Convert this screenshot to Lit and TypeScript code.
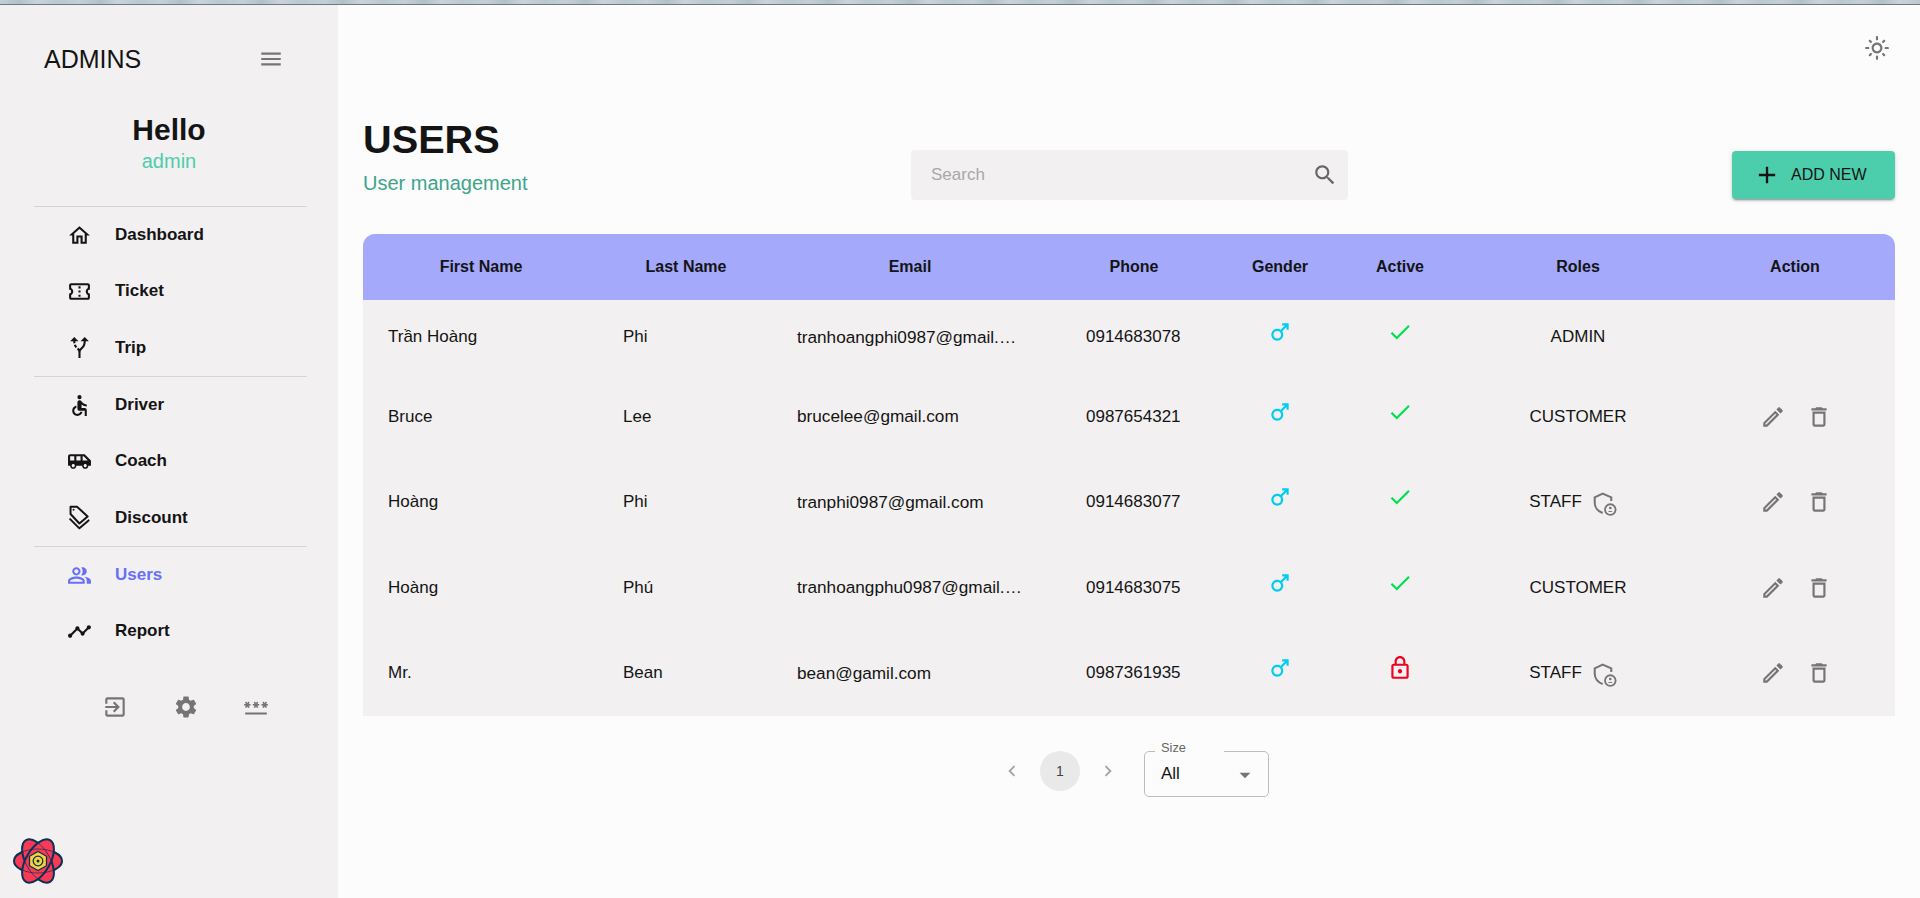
import { LitElement, html, css, svg } from "lit";
import { customElement } from "lit/decorators.js";

const P = {
  menu: "M3 18h18v-2H3v2zm0-5h18v-2H3v2zm0-7v2h18V6H3z",
  home: "m12 5.69 5 4.5V18h-2v-6H9v6H7v-7.81l5-4.5M12 3 2 12h3v8h6v-6h2v6h6v-8h3L12 3z",
  ticket: "M22 10V6c0-1.11-.9-2-2-2H4c-1.1 0-1.99.89-1.99 2v4c1.1 0 1.99.9 1.99 2s-.89 2-2 2v4c0 1.1.9 2 2 2h16c1.1 0 2-.9 2-2v-4c-1.1 0-2-.9-2-2s.9-2 2-2zm-2-1.46c-1.19.69-2 1.99-2 3.46s.81 2.77 2 3.46V18H4v-2.54c1.19-.69 2-1.99 2-3.46 0-1.48-.8-2.77-1.99-3.46L4 6h16v2.54zM11 15h2v2h-2zm0-4h2v2h-2zm0-4h2v2h-2z",
  route: "M9.78 11.16l-1.42 1.42c-.68-.69-1.34-1.58-1.79-2.94l1.94-.49c.32.89.77 1.5 1.27 2.01zM11 6 7 2 3 6h3.02c.02.81.08 1.54.19 2.17l1.94-.49C8.08 7.2 8.03 6.63 8.02 6H11zm10 0-4-4-4 4h2.99c-.1 3.68-1.28 4.75-2.54 5.88-.5.44-1.01.92-1.45 1.55-.34-.49-.73-.88-1.13-1.24L9.46 13.6c.93.85 1.54 1.54 1.54 3.4v5h2v-5c0-2.02.71-2.66 1.79-3.63 1.38-1.24 3.08-2.78 3.2-7.37H21z",
  driver: "M14 4a2 2 0 1 1-4 0 2 2 0 0 1 4 0zM19 13v-2c-1.54.02-3.09-.75-4.07-1.83l-1.29-1.43c-.17-.19-.38-.34-.61-.45-.01 0-.01-.01-.02-.01H13c-.35-.2-.75-.3-1.19-.26C10.76 7.11 10 8.04 10 9.09V15c0 1.1.9 2 2 2h5v5h2v-5.5c0-1.1-.9-2-2-2h-3v-3.45c1.29 1.07 3.25 1.94 5 1.95zm-6.17 5c-.41 1.16-1.52 2-2.83 2-1.66 0-3-1.34-3-3 0-1.31.84-2.41 2-2.83V12.1c-2.28.46-4 2.48-4 4.9 0 2.76 2.24 5 5 5 2.42 0 4.44-1.72 4.9-4h-2.07z",
  coach: "M17 5H3c-1.1 0-2 .89-2 2v9h2c0 1.65 1.34 3 3 3s3-1.35 3-3h5.5c0 1.65 1.34 3 3 3s3-1.35 3-3H23v-5l-6-6zM3 11V7h4v4H3zm3 6.5c-.83 0-1.5-.67-1.5-1.5s.67-1.5 1.5-1.5 1.5.67 1.5 1.5-.67 1.5-1.5 1.5zm7-6.5H9V7h4v4zm4.5 6.5c-.83 0-1.5-.67-1.5-1.5s.67-1.5 1.5-1.5 1.5.67 1.5 1.5-.67 1.5-1.5 1.5zM15 11V7h1l4 4h-5z",
  users: "M16.67 13.13C18.04 14.06 19 15.32 19 17v3h4v-3c0-2.18-3.57-3.47-6.33-3.87zM15 12c2.21 0 4-1.79 4-4s-1.79-4-4-4c-.47 0-.91.1-1.33.24C14.5 5.27 15 6.58 15 8s-.5 2.73-1.33 3.76c.42.14.86.24 1.33.24zm-6 0c2.21 0 4-1.79 4-4s-1.79-4-4-4-4 1.79-4 4 1.79 4 4 4zm0-6c1.1 0 2 .9 2 2s-.9 2-2 2-2-.9-2-2 .9-2 2-2zm0 7c-2.67 0-8 1.34-8 4v3h16v-3c0-2.66-5.33-4-8-4zm6 5H3v-.99C3.2 16.29 6.3 15 9 15s5.8 1.29 6 2v1z",
  report: "M23 8c0 1.1-.9 2-2 2-.18 0-.35-.02-.51-.07l-3.56 3.55c.05.16.07.34.07.52 0 1.1-.9 2-2 2s-2-.9-2-2c0-.18.02-.36.07-.52l-2.55-2.55c-.16.05-.34.07-.52.07s-.36-.02-.52-.07l-4.55 4.56c.05.16.07.33.07.51 0 1.1-.9 2-2 2s-2-.9-2-2 .9-2 2-2c.18 0 .35.02.51.07l4.56-4.55C8.02 9.36 8 9.18 8 9c0-1.1.9-2 2-2s2 .9 2 2c0 .18-.02.36-.07.52l2.55 2.55c.16-.05.34-.07.52-.07s.36.02.52.07l3.55-3.56C19.02 8.35 19 8.18 19 8c0-1.1.9-2 2-2s2 .9 2 2z",
  exit: "M10.09 15.59 11.5 17l5-5-5-5-1.41 1.41L12.67 11H3v2h9.67l-2.58 2.59zM19 3H5c-1.11 0-2 .9-2 2v4h2V5h14v14H5v-4H3v4c0 1.1.89 2 2 2h14c1.1 0 2-.9 2-2V5c0-1.1-.9-2-2-2z",
  settings: "M19.14 12.94c.04-.3.06-.61.06-.94 0-.32-.02-.64-.07-.94l2.03-1.58c.18-.14.23-.41.12-.61l-1.92-3.32c-.12-.22-.37-.29-.59-.22l-2.39.96c-.5-.38-1.03-.7-1.62-.94l-.36-2.54c-.04-.24-.24-.41-.48-.41h-3.84c-.24 0-.43.17-.47.41l-.36 2.54c-.59.24-1.13.57-1.62.94l-2.39-.96c-.22-.08-.47 0-.59.22L2.74 8.87c-.12.21-.08.47.12.61l2.03 1.58c-.05.3-.09.63-.09.94s.02.64.07.94l-2.03 1.58c-.18.14-.23.41-.12.61l1.92 3.32c.12.22.37.29.59.22l2.39-.96c.5.38 1.03.7 1.62.94l.36 2.54c.05.24.24.41.48.41h3.84c.24 0 .44-.17.47-.41l.36-2.54c.59-.24 1.13-.56 1.62-.94l2.39.96c.22.08.47 0 .59-.22l1.92-3.32c.12-.22.07-.47-.12-.61l-2.01-1.58zM12 15.6c-1.98 0-3.6-1.62-3.6-3.6s1.62-3.6 3.6-3.6 3.6 1.62 3.6 3.6-1.62 3.6-3.6 3.6z",
  password: "M2 17h20v2H2v-2zm1.15-4.05L4 11.47l.85 1.48 1.3-.75-.85-1.48H7v-1.5H5.3l.85-1.47L4.85 7 4 8.47 3.15 7l-1.3.75.85 1.47H1v1.5h1.7l-.85 1.48 1.3.75zm6.7-.75 1.3.75.85-1.48.85 1.48 1.3-.75-.85-1.48H15v-1.5h-1.7l.85-1.47-1.3-.75L12 8.47 11.15 7l-1.3.75.85 1.47H9v1.5h1.7l-.85 1.48zM23 9.22h-1.7l.85-1.47-1.3-.75L20 8.47 19.15 7l-1.3.75.85 1.47H17v1.5h1.7l-.85 1.48 1.3.75.85-1.48.85 1.48 1.3-.75-.85-1.48H23v-1.5z",
  search: "M15.5 14h-.79l-.28-.27C15.41 12.59 16 11.11 16 9.5 16 5.91 13.09 3 9.5 3S3 5.91 3 9.5 5.91 16 9.5 16c1.61 0 3.09-.59 4.23-1.57l.27.28v.79l5 4.99L20.49 19l-4.99-5zm-6 0C7.01 14 5 11.99 5 9.5S7.01 5 9.5 5 14 7.01 14 9.5 11.99 14 9.5 14z",
  add: "M19 13h-6v6h-2v-6H5v-2h6V5h2v6h6v2z",
  male: "M9.5 11c1.93 0 3.5 1.57 3.5 3.5S11.43 18 9.5 18 6 16.43 6 14.5 7.57 11 9.5 11zm0-2C6.46 9 4 11.46 4 14.5S6.46 20 9.5 20s5.5-2.46 5.5-5.5c0-1.16-.36-2.23-.97-3.12L18 7.42V10h2V4h-6v2h2.58l-3.97 3.97C11.73 9.36 10.66 9 9.5 9z",
  done: "M9 16.2 4.8 12l-1.4 1.4L9 19 21 7l-1.4-1.4L9 16.2z",
  lock: "M18 8h-1V6c0-2.76-2.24-5-5-5S7 3.24 7 6v2H6c-1.1 0-2 .9-2 2v10c0 1.1.9 2 2 2h12c1.1 0 2-.9 2-2V10c0-1.1-.9-2-2-2zM9 6c0-1.66 1.34-3 3-3s3 1.34 3 3v2H9V6zm9 14H6V10h12v10zm-6-3c1.1 0 2-.9 2-2s-.9-2-2-2-2 .9-2 2 .9 2 2 2z",
  edit: "M14.06 9.02l.92.92L5.92 19H5v-.92l9.06-9.06M17.66 3c-.25 0-.51.1-.7.29l-1.83 1.83 3.75 3.75 1.83-1.83c.39-.39.39-1.02 0-1.41l-2.34-2.34c-.2-.2-.45-.29-.71-.29zm-3.6 3.19L3 17.25V21h3.75L17.81 9.94l-3.75-3.75z",
  trash: "M6 19c0 1.1.9 2 2 2h8c1.1 0 2-.9 2-2V7H6v12zM8 9h8v10H8V9zm7.5-5-1-1h-5l-1 1H5v2h14V4h-3.5z",
  sun: "M12 9c1.65 0 3 1.35 3 3s-1.35 3-3 3-3-1.35-3-3 1.35-3 3-3m0-2c-2.76 0-5 2.24-5 5s2.24 5 5 5 5-2.24 5-5-2.24-5-5-5zM2 13h2c.55 0 1-.45 1-1s-.45-1-1-1H2c-.55 0-1 .45-1 1s.45 1 1 1zm18 0h2c.55 0 1-.45 1-1s-.45-1-1-1h-2c-.55 0-1 .45-1 1s.45 1 1 1zM11 2v2c0 .55.45 1 1 1s1-.45 1-1V2c0-.55-.45-1-1-1s-1 .45-1 1zm0 18v2c0 .55.45 1 1 1s1-.45 1-1v-2c0-.55-.45-1-1-1s-1 .45-1 1zM5.99 4.58c-.39-.39-1.03-.39-1.41 0-.39.39-.39 1.03 0 1.41l1.06 1.06c.39.39 1.03.39 1.41 0s.39-1.03 0-1.41L5.99 4.58zm12.37 12.37c-.39-.39-1.03-.39-1.41 0-.39.39-.39 1.03 0 1.41l1.06 1.06c.39.39 1.03.39 1.41 0 .39-.39.39-1.03 0-1.41l-1.06-1.06zm1.06-10.96c.39-.39.39-1.03 0-1.41-.39-.39-1.03-.39-1.41 0l-1.06 1.06c-.39.39-.39 1.03 0 1.41s1.03.39 1.41 0l1.06-1.06zM7.05 18.36c.39-.39.39-1.03 0-1.41-.39-.39-1.03-.39-1.41 0l-1.06 1.06c-.39.39-.39 1.03 0 1.41s1.03.39 1.41 0l1.06-1.06z",
  prev: "M15.41 7.41 14 6l-6 6 6 6 1.41-1.41L10.83 12z",
  next: "M10 6 8.59 7.41 13.17 12l-4.58 4.59L10 18l6-6z",
  arrow: "M7 10l5 5 5-5z",
};

const icon = (d: string, cls = "") =>
  html`<svg class="icon ${cls}" viewBox="0 0 24 24" fill="currentColor"><path d=${d}></path></svg>`;

const tagIcon = html`<svg class="icon" viewBox="0 0 24 24" fill="none" stroke="currentColor" stroke-width="1.9" stroke-linejoin="round" stroke-linecap="round">
  <path d="M3.4 1.600h6.200l10.200 9.400-7.900 6.800-8.500-9.200z"></path>
  <path d="M3 13.600l8.900 8.800 8.800-7.600"></path>
  <circle cx="6.300" cy="4.600" r=".9" fill="currentColor" stroke="none"></circle>
</svg>`;

const shieldIcon = html`<svg class="icon shield" viewBox="0 0 24 24" fill="none" stroke="currentColor" stroke-width="1.7">
  <path d="M17.600 10V6.900L10.500 3.800 3.900 6.900v4.300c0 4 2.700 7.400 6.600 8.700"></path>
  <circle cx="16.800" cy="17" r="4.400" stroke-width="1.500"></circle>
  <circle cx="16.800" cy="15.700" r="1.100" fill="currentColor" stroke="none"></circle>
  <path d="M14.900 19.100c.4-1.200 3.400-1.200 3.800 0z" fill="currentColor" stroke="none"></path>
</svg>`;

const logo = html`<svg class="logo" viewBox="0 0 50 46" aria-hidden="true">
  <g fill="#f93a57" stroke="#0b3154" stroke-width="2">
    ${[0, 60, 120].map(
      (r) => svg`<ellipse cx="25" cy="23" rx="24" ry="12" transform="rotate(${r} 25 23)"></ellipse>`
    )}
  </g>
  <g fill="none" stroke="#0b3154" stroke-width=".7">
    ${[0, 60].map(
      (r) => svg`<ellipse cx="25" cy="23" rx="24" ry="12" transform="rotate(${r} 25 23)"></ellipse>`
    )}
  </g>
  <path d="M25 13.500 33.500 18.300V27.700L25 32.500 16.500 27.700V18.300Z" fill="#f6d33c" stroke="#0b3154" stroke-width="1.300"></path>
  <circle cx="25" cy="23" r="4.800" fill="#f6d33c" stroke="#0b3154" stroke-width="1.300"></circle>
  <circle cx="25" cy="23" r="1.500" fill="#0b3154"></circle>
</svg>`;

type Row = { first: string; last: string; email: string; phone: string; active: boolean; role: string; actions: boolean };

const rows: Row[] = [
  { first: "Trần Hoàng", last: "Phi", email: "tranhoangphi0987@gmail.com", phone: "0914683078", active: true, role: "ADMIN", actions: false },
  { first: "Bruce", last: "Lee", email: "brucelee@gmail.com", phone: "0987654321", active: true, role: "CUSTOMER", actions: true },
  { first: "Hoàng", last: "Phi", email: "tranphi0987@gmail.com", phone: "0914683077", active: true, role: "STAFF", actions: true },
  { first: "Hoàng", last: "Phú", email: "tranhoangphu0987@gmail.com", phone: "0914683075", active: true, role: "CUSTOMER", actions: true },
  { first: "Mr.", last: "Bean", email: "bean@gamil.com", phone: "0987361935", active: false, role: "STAFF", actions: true },
];

const navGroups = [
  [
    { label: "Dashboard", icon: icon(P.home) },
    { label: "Ticket", icon: icon(P.ticket) },
    { label: "Trip", icon: icon(P.route) },
  ],
  [
    { label: "Driver", icon: icon(P.driver) },
    { label: "Coach", icon: icon(P.coach) },
    { label: "Discount", icon: tagIcon },
  ],
  [
    { label: "Users", icon: icon(P.users), active: true },
    { label: "Report", icon: icon(P.report) },
  ],
];

@customElement("app-root")
export class AppRoot extends LitElement {
  static styles = css`
    :host {
      display: block;
      font-family: "Liberation Sans", Arial, sans-serif;
      color: #141414;
    }
    * { box-sizing: border-box; }
    .page { height: 898px; display: flex; flex-direction: column; overflow: hidden; background: #fcfcfc; }
    .strip {
      height: 5px;
      flex: none;
      border-bottom: 1px solid #72787c;
      background: repeating-linear-gradient(90deg, #c2cfd6 0, #b2c0c8 19px, #c9d4da 37px, #bac8cf 58px, #c2cfd6 81px);
    }
    .body { flex: 1; display: flex; min-height: 0; }
    .icon { width: 26px; height: 26px; display: block; flex: none; }

    .side { width: 338px; flex: none; background: #f2f0f0; display: flex; flex-direction: column; padding: 0 31px 0 34px; }
    .brand { height: 56px; margin-top: 26px; display: flex; align-items: center; justify-content: space-between; padding: 0 23px 0 10px; }
    .brand span { font-size: 25px; }
    .brand .icon { color: #757575; }
    .profile { margin: 26px 3px 33px 0; text-align: center; }
    .hello { font-size: 30px; font-weight: 700; line-height: 34px; }
    .admin { font-size: 20px; color: #4cceac; line-height: 23px; margin-top: 3px; }
    .group { border-top: 1px solid #d6d4d4; }
    .item { height: 56.330px; display: flex; align-items: center; padding-left: 33px; font-size: 17px; font-weight: 700; }
    .item .icon { width: 25px; height: 25px; margin-right: 23px; }
    .item.on { color: #6870fa; }
    .tools { display: flex; padding-left: 68px; margin-top: 34px; gap: 44.500px; color: #757575; }
    .logo { width: 50px; height: 46px; display: block; margin-top: auto; margin-bottom: 14px; margin-left: -21px; }

    .main { flex: 1; min-width: 0; padding: 0 25px; }
    .top { height: 110px; display: flex; justify-content: flex-end; padding: 30px 5px 0 0; color: #757575; }
    .head { display: grid; grid-template-columns: 548px 437px 1fr; align-items: end; height: 85px; }
    h1 { margin: 0; font-size: 39.700px; line-height: 48px; font-weight: 700; }
    .sub { font-size: 20px; line-height: 23px; color: #3da58a; margin: 9px 0 5px; }
    .search { height: 50px; background: #f2f0f0; border-radius: 4px; display: flex; align-items: center; justify-content: space-between; padding: 0 10px 0 20px; font-size: 17px; color: #a8a8a8; }
    .search .icon { color: #666; }
    .add { justify-self: end; width: 163px; height: 48px; margin-bottom: 1px; border-radius: 4px; background: #4cceac; display: flex; align-items: center; padding-left: 21px; gap: 10px; font-size: 16px;
      box-shadow: 0 3px 1px -2px rgba(0,0,0,.2), 0 2px 2px rgba(0,0,0,.14), 0 1px 5px rgba(0,0,0,.12); }
    .add .icon { width: 28px; height: 28px; }

    .table { margin-top: 34px; }
    .row { display: grid; grid-template-columns: 236px 174px 274px 174px 118px 122px 234px 200px; align-items: center; }
    .thead { height: 66px; background: #a4a9fc; border-radius: 12px 12px 0 0; font-size: 16px; font-weight: 700; text-align: center; }
    .tbody { background: #f2f0f0; }
    .tr { height: 85.500px; font-size: 17px; }
    .tr.first { height: 74px; }
    .c1 { padding-left: 25px; }
    .c2, .c3 { padding-left: 24px; }
    .c4 { padding-left: 39px; }
    .c3 { font-size: 17.200px; padding-right: 25px; overflow: hidden; white-space: nowrap; text-overflow: ellipsis; }
    .mid { display: flex; justify-content: center; }
    .male { color: #00cdf0; margin-top: -10px; }
    .yes { color: #00e050; margin-top: -10px; }
    .no { color: #f0001f; margin-top: -10px; }
    .role { display: flex; align-items: center; justify-content: center; }
    .staff { padding-right: 8px; }
    .shield { width: 29px; height: 29px; margin-left: 8px; margin-top: 2px; color: #757575; }
    .acts { display: flex; justify-content: center; gap: 20px; color: #757575; padding-left: 2px; }

    .pager { margin-top: 35px; padding-left: 629px; display: flex; align-items: flex-start; }
    .pg { width: 40px; height: 40px; display: flex; align-items: center; justify-content: center; font-size: 14px; color: #444; margin-right: 8px; }
    .pg .icon { width: 22px; height: 22px; color: #a3a3a3; }
    .pg.cur { border-radius: 50%; background: #e9e9e9; }
    .size { position: relative; width: 125px; height: 46px; margin-left: 8px; border: 1px solid #bdbdbd; border-radius: 5px; display: flex; align-items: center; justify-content: space-between; padding: 0 10px 0 16px; font-size: 17px; }
    .size .icon { color: #757575; margin-top: 2px; }
    .legend { position: absolute; left: 10px; top: -11px; width: 69px; height: 14px; padding-left: 6px; background: #fcfcfc; font-size: 12.800px; line-height: 14px; color: #666; }
  `;

  render() {
    return html`<div class="page">
      <div class="strip"></div>
      <div class="body">
        <aside class="side">
          <div class="brand"><span>ADMINS</span>${icon(P.menu)}</div>
          <div class="profile">
            <div class="hello">Hello</div>
            <div class="admin">admin</div>
          </div>
          ${navGroups.map(
            (g) => html`<div class="group">
              ${g.map(
                (it: any) => html`<div class="item ${it.active ? "on" : ""}">${it.icon}<span>${it.label}</span></div>`
              )}
            </div>`
          )}
          <div class="tools">${icon(P.exit)}${icon(P.settings)}${icon(P.password)}</div>
          ${logo}
        </aside>
        <main class="main">
          <div class="top">${icon(P.sun)}</div>
          <div class="head">
            <div>
              <h1>USERS</h1>
              <div class="sub">User management</div>
            </div>
            <div class="search"><span>Search</span>${icon(P.search)}</div>
            <div class="add">${icon(P.add)}<span>ADD NEW</span></div>
          </div>
          <div class="table">
            <div class="row thead">
              <div>First Name</div><div>Last Name</div><div>Email</div><div>Phone</div>
              <div>Gender</div><div>Active</div><div>Roles</div><div>Action</div>
            </div>
            <div class="tbody">
              ${rows.map(
                (r, i) => html`<div class="row tr ${i === 0 ? "first" : ""}">
                  <div class="c1">${r.first}</div>
                  <div class="c2">${r.last}</div>
                  <div class="c3">${r.email}</div>
                  <div class="c4">${r.phone}</div>
                  <div class="mid">${icon(P.male, "male")}</div>
                  <div class="mid">${r.active ? icon(P.done, "yes") : icon(P.lock, "no")}</div>
                  <div class="role ${r.role === "STAFF" ? "staff" : ""}">
                    <span>${r.role}</span>${r.role === "STAFF" ? shieldIcon : ""}
                  </div>
                  <div class="acts">${r.actions ? html`${icon(P.edit)}${icon(P.trash)}` : ""}</div>
                </div>`
              )}
            </div>
          </div>
          <div class="pager">
            <div class="pg">${icon(P.prev)}</div>
            <div class="pg cur">1</div>
            <div class="pg">${icon(P.next)}</div>
            <div class="size">
              <span class="legend">Size</span>
              <span>All</span>${icon(P.arrow)}
            </div>
          </div>
        </main>
      </div>
    </div>`;
  }
}
